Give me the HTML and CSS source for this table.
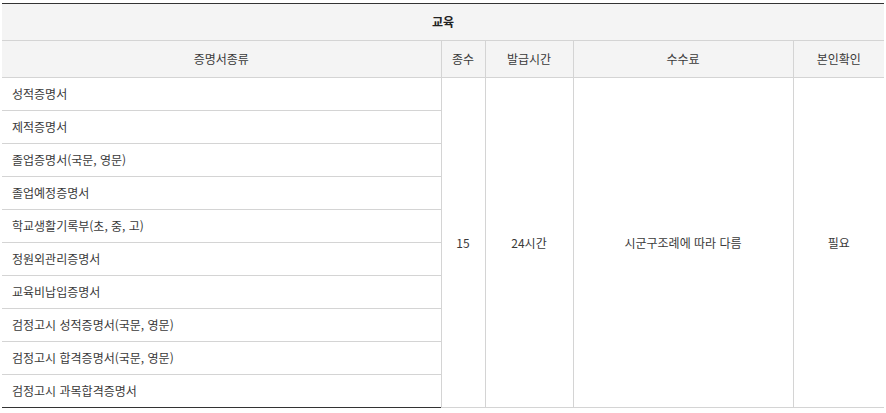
FILE: index.html
```html
<!DOCTYPE html>
<html lang="ko">
<head>
<meta charset="utf-8">
<link rel="stylesheet" href="styles.css">
</head>
<body>
<table class="cert">
  <colgroup>
    <col class="c-name">
    <col class="c-count">
    <col class="c-time">
    <col class="c-fee">
    <col class="c-id">
  </colgroup>
  <thead>
    <tr class="cat"><th colspan="5">교육</th></tr>
    <tr class="heads">
      <th>증명서종류</th>
      <th>종수</th>
      <th>발급시간</th>
      <th>수수료</th>
      <th>본인확인</th>
    </tr>
  </thead>
  <tbody>
    <tr>
      <td class="name">성적증명서</td>
      <td class="mid" rowspan="10">15</td>
      <td class="mid" rowspan="10">24시간</td>
      <td class="mid" rowspan="10">시군구조례에 따라 다름</td>
      <td class="mid" rowspan="10">필요</td>
    </tr>
    <tr><td class="name">제적증명서</td></tr>
    <tr><td class="name">졸업증명서(국문, 영문)</td></tr>
    <tr><td class="name">졸업예정증명서</td></tr>
    <tr><td class="name">학교생활기록부(초, 중, 고)</td></tr>
    <tr><td class="name">정원외관리증명서</td></tr>
    <tr><td class="name">교육비납입증명서</td></tr>
    <tr><td class="name">검정고시 성적증명서(국문, 영문)</td></tr>
    <tr><td class="name">검정고시 합격증명서(국문, 영문)</td></tr>
    <tr><td class="name">검정고시 과목합격증명서</td></tr>
  </tbody>
</table>
</body>
</html>
```

FILE: styles.css
```css
html, body {
  margin: 0;
  padding: 0;
  background: #fff;
}
body {
  padding: 3px 2px 0 2px;
  font-family: "Noto Sans CJK KR", "Noto Sans", sans-serif;
  font-size: 12px;
  color: #3a3a3a;
}
.cert {
  width: 882px;
  border-collapse: collapse;
  table-layout: fixed;
  border-top: 1px solid #333;
  border-bottom: 1px solid #333;
}
.c-name { width: 439px; }
.c-count { width: 44px; }
.c-time { width: 88px; }
.c-fee { width: 220px; }
.c-id { width: 91px; }
.cert th, .cert td {
  padding: 0;
  border: 1px solid #d4d4d4;
  font-weight: 400;
  text-align: center;
  vertical-align: middle;
  line-height: 16px;
}
.cert th:first-child, .cert td:first-child { border-left: none; }
.cert th:last-child, .cert td:last-child { border-right: none; }
.cert thead th {
  background: #f4f4f4;
  height: 36px;
}
.cat th {
  font-weight: 700;
  color: #222;
  border-top: none;
}
.cert td.name {
  text-align: left;
  padding-left: 10px;
  height: 32px;
}
.cert tbody tr:last-child td { border-bottom: none; }
```
